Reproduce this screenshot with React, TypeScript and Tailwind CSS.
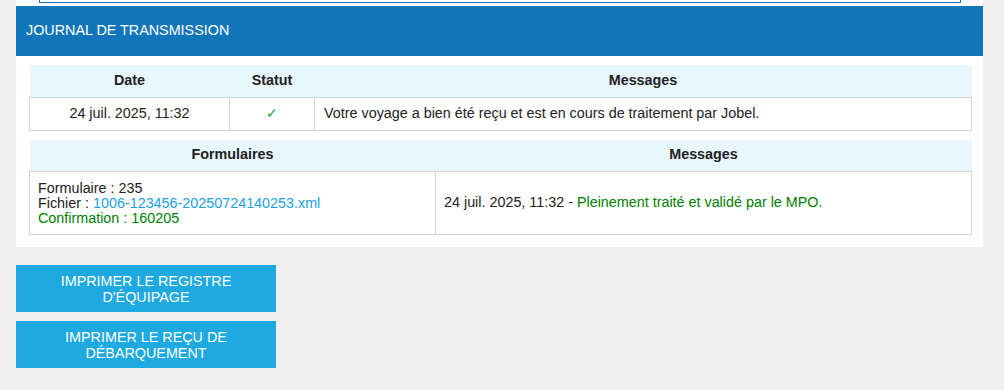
import React from 'react';

export default function App() {
    return (
        <div className="min-h-screen bg-[#efefef] font-['Liberation_Sans',Arial,sans-serif] text-[14.35px] text-[#222]">
            <div className="ml-4 w-[967px] bg-white pb-3">
                {/* bottom of the box above, scrolled out of view */}
                <div className="ml-[23px] h-[3px] w-[922px] border-x border-b border-[#1176b9]" />
                <div className="mt-[3px] flex h-[50px] items-center bg-[#1176b9] px-[10px] text-white">
                    JOURNAL DE TRANSMISSION
                </div>
                <div className="px-[13px] pt-[9px]">
                    <table className="w-[943px] border-collapse">
                        <thead>
                            <tr className="h-8 bg-[#e8f6fe] font-bold">
                                <th className="w-[200px] text-center">Date</th>
                                <th className="w-[85px] text-center">Statut</th>
                                <th className="text-center">Messages</th>
                            </tr>
                        </thead>
                        <tbody>
                            <tr className="h-[33px]">
                                <td className="border border-[#d3d3d3] text-center">24 juil. 2025, 11:32</td>
                                <td className="border border-[#d3d3d3] text-center text-[#2a9a2a]">✓</td>
                                <td className="border border-[#d3d3d3] px-[9px]">
                                    Votre voyage a bien été reçu et est en cours de traitement par Jobel.
                                </td>
                            </tr>
                        </tbody>
                    </table>

                    <table className="mt-[9px] w-[943px] border-collapse">
                        <thead>
                            <tr className="h-8 bg-[#e8f6fe] font-bold">
                                <th className="w-[406px] text-center">Formulaires</th>
                                <th className="text-center">Messages</th>
                            </tr>
                        </thead>
                        <tbody>
                            <tr className="h-[63px]">
                                <td className="border border-[#d3d3d3] px-[8px] leading-[15px]">
                                    <div>Formulaire : 235</div>
                                    <div>
                                        Fichier : <a className="text-[#1ba1e2]">1006-123456-20250724140253.xml</a>
                                    </div>
                                    <div className="text-[#008000]">Confirmation : 160205</div>
                                </td>
                                <td className="border border-[#d3d3d3] px-[8px]">
                                    24 juil. 2025, 11:32 - <span className="text-[#008000]">Pleinement traité et validé par le MPO.</span>
                                </td>
                            </tr>
                        </tbody>
                    </table>
                </div>
            </div>

            <div className="ml-4 mt-[18px] flex flex-col gap-[9px]">
                <button className="flex h-[47px] w-[260px] items-center justify-center bg-[#1eaae0] px-8 text-center leading-4 text-white">
                    IMPRIMER LE REGISTRE D'ÉQUIPAGE
                </button>
                <button className="flex h-[47px] w-[260px] items-center justify-center bg-[#1eaae0] px-10 text-center leading-4 text-white">
                    IMPRIMER LE REÇU DE DÉBARQUEMENT
                </button>
            </div>
        </div>
    );
}
